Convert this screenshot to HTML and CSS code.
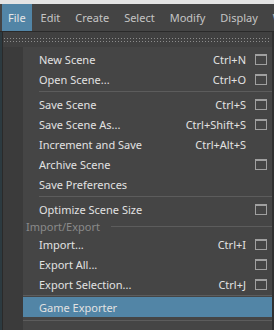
FILE: index.html
```html
<!doctype html>
<html lang="en">
  <head>
    <meta charset="UTF-8" />
    <title>File menu</title>
    <link rel="stylesheet" href="styles.css">
  </head>
  <body>
    <div class="topstrip"></div>
    <div class="menubar">
      <span class="mb-item active">File</span>
      <span class="mb-item">Edit</span>
      <span class="mb-item">Create</span>
      <span class="mb-item">Select</span>
      <span class="mb-item">Modify</span>
      <span class="mb-item">Display</span>
      <span class="mb-item">Windows</span>
    </div>

    <div class="page">
      <div class="edge"></div>
      <div class="dropdown">
        <div class="tearoff">
          <div class="dots"></div>
          <div class="dots"></div>
        </div>

        <div class="items">
          <div class="item">
            <span class="label">New Scene</span>
            <span class="key">Ctrl+N</span>
            <span class="opt"><i class="box"></i></span>
          </div>
          <div class="item">
            <span class="label">Open Scene...</span>
            <span class="key">Ctrl+O</span>
            <span class="opt"><i class="box"></i></span>
          </div>
          <div class="sep"></div>
          <div class="item">
            <span class="label">Save Scene</span>
            <span class="key">Ctrl+S</span>
            <span class="opt"><i class="box"></i></span>
          </div>
          <div class="item">
            <span class="label">Save Scene As...</span>
            <span class="key">Ctrl+Shift+S</span>
            <span class="opt"><i class="box"></i></span>
          </div>
          <div class="item">
            <span class="label">Increment and Save</span>
            <span class="key">Ctrl+Alt+S</span>
            <span class="opt"></span>
          </div>
          <div class="item">
            <span class="label">Archive Scene</span>
            <span class="key"></span>
            <span class="opt"><i class="box"></i></span>
          </div>
          <div class="item">
            <span class="label">Save Preferences</span>
            <span class="key"></span>
            <span class="opt"></span>
          </div>
          <div class="sep"></div>
          <div class="item">
            <span class="label">Optimize Scene Size</span>
            <span class="key"></span>
            <span class="opt"><i class="box"></i></span>
          </div>
          <div class="section">
            <span class="section-title">Import/Export</span>
            <span class="section-line"></span>
          </div>
          <div class="item">
            <span class="label">Import...</span>
            <span class="key">Ctrl+I</span>
            <span class="opt"><i class="box"></i></span>
          </div>
          <div class="item">
            <span class="label">Export All...</span>
            <span class="key"></span>
            <span class="opt"><i class="box"></i></span>
          </div>
          <div class="item">
            <span class="label">Export Selection...</span>
            <span class="key">Ctrl+J</span>
            <span class="opt"><i class="box"></i></span>
          </div>
          <div class="sep wide"></div>
          <div class="item hover">
            <span class="label">Game Exporter</span>
            <span class="key"></span>
            <span class="opt"></span>
          </div>
          <div class="sep wide"></div>
          <div class="item">
            <span class="label"></span>
            <span class="key"></span>
            <span class="opt"></span>
          </div>
        </div>
      </div>
    </div>
  </body>
</html>
```

FILE: styles.css
```css
body {
  margin: 0;
  width: 274px;
  height: 330px;
  overflow: hidden;
  background-color: #303030;
  font-family: "Noto Sans", "Open Sans", sans-serif;
  font-size: 11px;
}

.topstrip {
  height: 4px;
  background-color: #e4e4e4;
}

.menubar {
  display: flex;
  height: 27px;
  padding-left: 2px;
  background-color: #444444;
  border-bottom: 1px solid #2a2a2a;
  white-space: nowrap;
  overflow: hidden;
}

.mb-item {
  display: flex;
  align-items: center;
  padding: 0 8px 0 7px;
  color: #c4c4c4;
}

.mb-item.active {
  padding: 0 6px 0 6px;
  margin-right: 2px;
  background-color: #5285a6;
  color: #e6e6e6;
}

.page {
  display: flex;
}

.edge {
  width: 2px;
  height: 300px;
  background-color: #2c3a40;
}

.dropdown {
  width: 269px;
  border-left: 1px solid #2a2a2a;
  background-color: #454545;
}

/* tear-off handle */
.tearoff {
  height: 15px;
  padding-top: 6px;
  box-sizing: border-box;
  background-color: #404040;
}

.dots {
  height: 1px;
  margin: 0 1px 2px 1px;
  background-image: linear-gradient(to right, #8c8c8c 1px, transparent 1px);
  background-size: 3px 1px;
}

.items {
  padding-top: 2px;
  background: linear-gradient(to right, #3b3b3b 20px, #454545 20px);
}

.item {
  display: flex;
  align-items: center;
  height: 20px;
  margin-left: 20px;
  padding-left: 16px;
  color: #e2e2e2;
  white-space: nowrap;
}

.item.hover {
  background-color: #5285a6;
}

.label {
  flex: 1;
}

.key {
  color: #e2e2e2;
}

.opt {
  display: flex;
  width: 26px;
  padding-left: 9px;
  box-sizing: border-box;
}

.box {
  display: block;
  width: 12px;
  height: 11px;
  box-sizing: border-box;
  border: 1px solid #a0a0a0;
  border-top-width: 2px;
}

.sep {
  height: 1px;
  margin: 2px 0 2px 36px;
  background-color: #5c5c5c;
}

.sep.wide {
  margin: 1px 0 1px 20px;
}

.item.hover + .sep.wide {
  margin-top: 3px;
}

.section {
  display: flex;
  align-items: center;
  height: 15px;
  margin-left: 20px;
  padding-left: 3px;
}

.section-title {
  color: #8a8a8a;
}

.section-line {
  flex: 1;
  height: 1px;
  margin-left: 11px;
  background-color: #5c5c5c;
}
```
